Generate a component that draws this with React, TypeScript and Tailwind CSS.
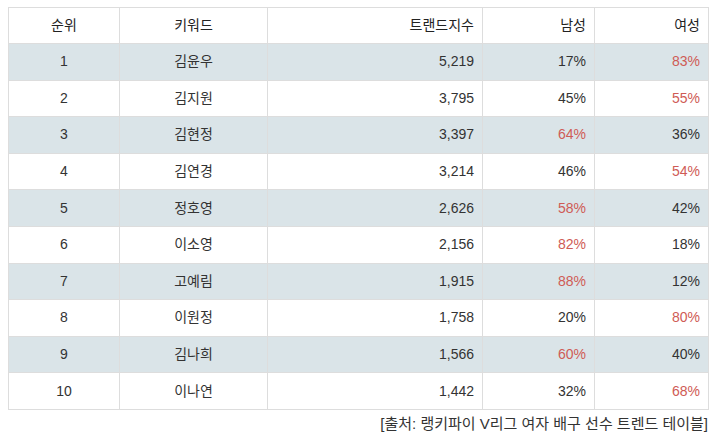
import React from 'react';

interface Row {
  rank: number;
  name: string;
  score: string;
  male: number;
  female: number;
}

const rows: Row[] = [
  { rank: 1, name: '김윤우', score: '5,219', male: 17, female: 83 },
  { rank: 2, name: '김지원', score: '3,795', male: 45, female: 55 },
  { rank: 3, name: '김현정', score: '3,397', male: 64, female: 36 },
  { rank: 4, name: '김연경', score: '3,214', male: 46, female: 54 },
  { rank: 5, name: '정호영', score: '2,626', male: 58, female: 42 },
  { rank: 6, name: '이소영', score: '2,156', male: 82, female: 18 },
  { rank: 7, name: '고예림', score: '1,915', male: 88, female: 12 },
  { rank: 8, name: '이원정', score: '1,758', male: 20, female: 80 },
  { rank: 9, name: '김나희', score: '1,566', male: 60, female: 40 },
  { rank: 10, name: '이나연', score: '1,442', male: 32, female: 68 },
];

export default function App() {
  const pct = (v: number, other: number) => (
    <span className={v > other ? 'text-[#cf5b55]' : 'text-[#333]'}>{v}%</span>
  );

  return (
    <div className="w-[716px] h-[441px] bg-white pt-[7px] pl-[8px] font-['Liberation_Sans','Noto_Sans_CJK_KR',sans-serif] text-[14px] text-[#333]">
      <table className="border-collapse w-[700px] table-fixed">
        <colgroup>
          <col className="w-[111px]" />
          <col className="w-[148px]" />
          <col className="w-[215px]" />
          <col className="w-[112px]" />
          <col className="w-[114px]" />
        </colgroup>
        <thead>
          <tr className="h-[36px] text-[#222]">
            <th className="border border-[#dddddd] font-normal text-center">순위</th>
            <th className="border border-[#dddddd] font-normal text-center">키워드</th>
            <th className="border border-[#dddddd] font-normal text-right pr-[8px]">트랜드지수</th>
            <th className="border border-[#dddddd] font-normal text-right pr-[8px]">남성</th>
            <th className="border border-[#dddddd] font-normal text-right pr-[8px]">여성</th>
          </tr>
        </thead>
        <tbody>
          {rows.map((r) => (
            <tr key={r.rank} className={`h-[36.6px] ${r.rank % 2 === 1 ? 'bg-[#dae4e8]' : 'bg-white'}`}>
              <td className="border border-[#dddddd] text-center">{r.rank}</td>
              <td className="border border-[#dddddd] text-center">{r.name}</td>
              <td className="border border-[#dddddd] text-right pr-[8px]">{r.score}</td>
              <td className="border border-[#dddddd] text-right pr-[8px]">{pct(r.male, r.female)}</td>
              <td className="border border-[#dddddd] text-right pr-[8px]">{pct(r.female, r.male)}</td>
            </tr>
          ))}
        </tbody>
      </table>
      <div className="w-[700px] text-right text-[15px] text-[#333] mt-[3px]">
        [출처: 랭키파이 V리그 여자 배구 선수 트렌드 테이블]
      </div>
    </div>
  );
}
